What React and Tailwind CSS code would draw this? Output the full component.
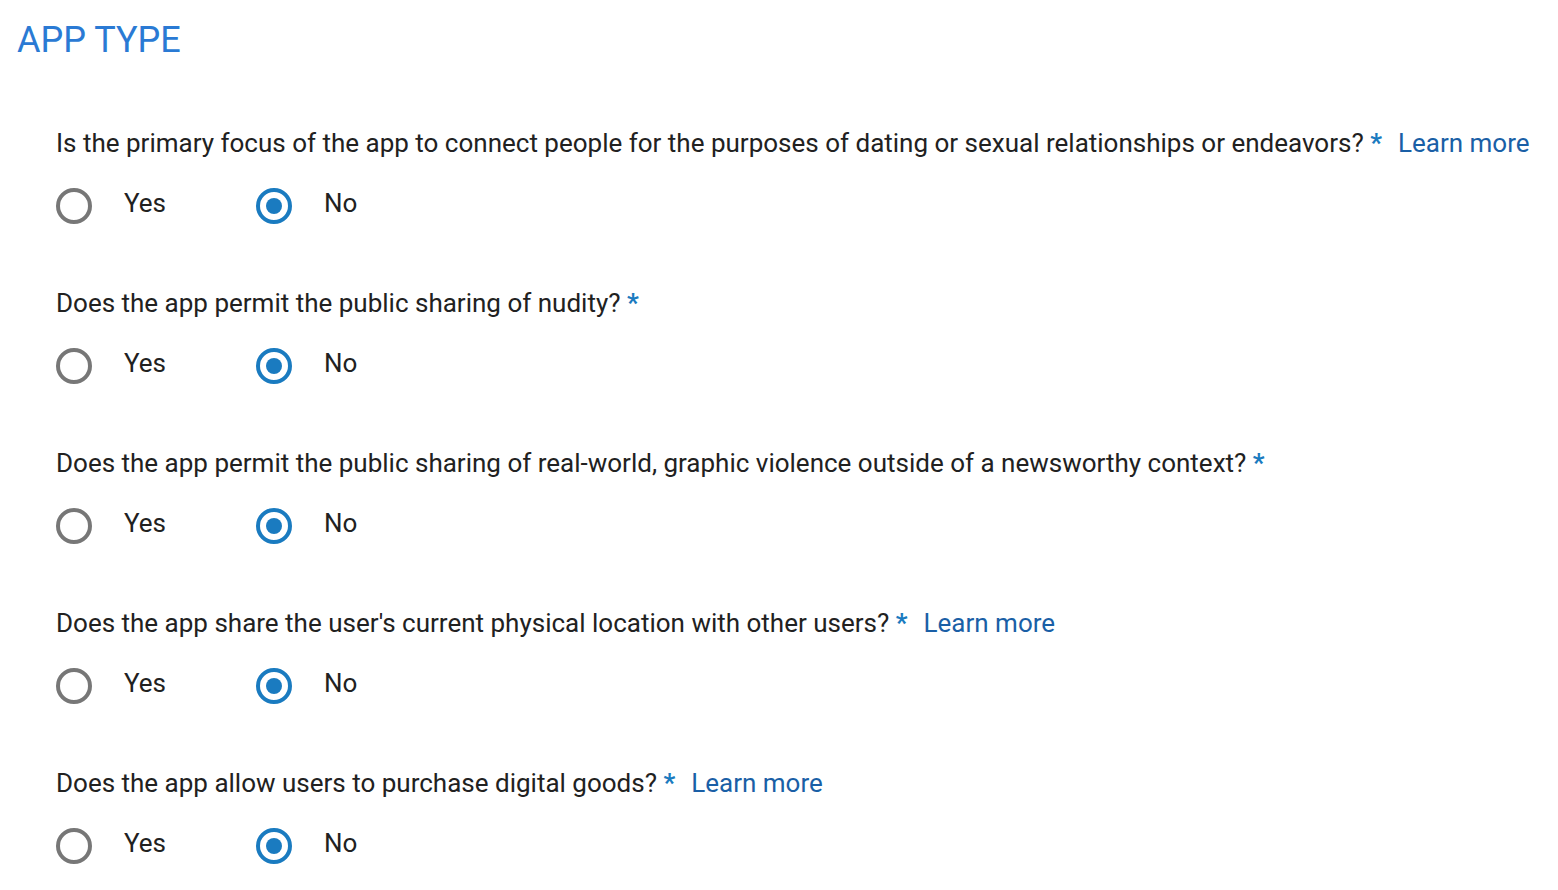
import React from 'react';

const questions = [
  {
    text: 'Is the primary focus of the app to connect people for the purposes of dating or sexual relationships or endeavors?',
    learnMore: true,
  },
  { text: 'Does the app permit the public sharing of nudity?', learnMore: false },
  {
    text: 'Does the app permit the public sharing of real-world, graphic violence outside of a newsworthy context?',
    learnMore: false,
  },
  {
    text: "Does the app share the user's current physical location with other users?",
    learnMore: true,
  },
  { text: 'Does the app allow users to purchase digital goods?', learnMore: true },
];

const Radio = ({ checked, label }) => (
  <label className="flex items-center">
    <span
      className={`flex h-9 w-9 items-center justify-center rounded-full border-4 ${
        checked ? 'border-[#1a7bc0]' : 'border-[#777777]'
      }`}
    >
      {checked && <span className="h-4 w-4 rounded-full bg-[#1a7bc0]" />}
    </span>
    <span className="relative -top-[3px] ml-8 text-[26px] leading-[32px] text-[#212121]">{label}</span>
  </label>
);

const Question = ({ text, learnMore }) => (
  <div className="h-[160px]">
    <p className="text-[26px] leading-[32px] text-[#212121]">
      {text} <span className="font-bold text-[#1a7bc0]">*</span>
      {learnMore && <a className="ml-[16px] text-[#1a5fa6]">Learn more</a>}
    </p>
    <div className="mt-[29px] flex items-center">
      <div className="w-[200px]">
        <Radio checked={false} label="Yes" />
      </div>
      <Radio checked label="No" />
    </div>
  </div>
);

export default function App() {
  return (
    <div className="min-h-screen bg-white font-['Roboto',sans-serif]">
      <h1 className="px-[17px] pt-[18px] text-[36px] leading-[44px] text-[#2a7ad4]">APP TYPE</h1>
      <div className="mt-[65px] pl-[56px]">
        {questions.map((q, i) => (
          <Question key={i} {...q} />
        ))}
      </div>
    </div>
  );
}
